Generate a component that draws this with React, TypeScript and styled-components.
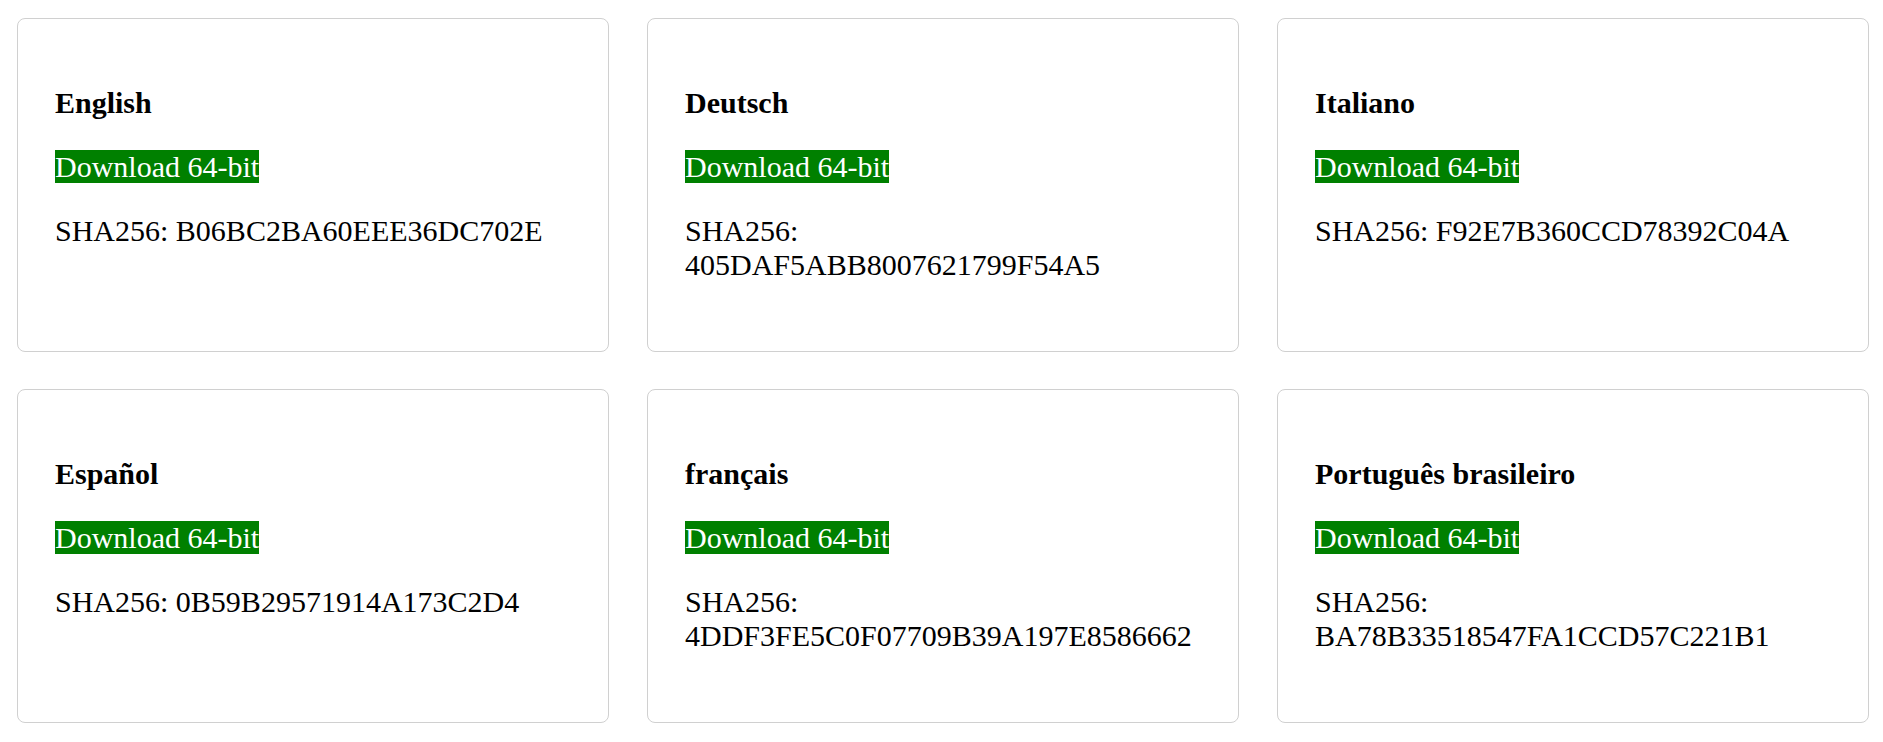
import React from "react";
import styled, { createGlobalStyle } from "styled-components";

const builds = [
  { lang: "English", sha: "B06BC2BA60EEE36DC702E" },
  { lang: "Deutsch", sha: "405DAF5ABB8007621799F54A5" },
  { lang: "Italiano", sha: "F92E7B360CCD78392C04A" },
  { lang: "Español", sha: "0B59B29571914A173C2D4" },
  { lang: "français", sha: "4DDF3FE5C0F07709B39A197E8586662" },
  { lang: "Português brasileiro", sha: "BA78B33518547FA1CCD57C221B1" },
];

const App: React.FC = () => {
  return (
    <>
      <GlobalStyle />
      <Grid>
        {builds.map((b) => (
          <Card key={b.lang}>
            <LangTitle>{b.lang}</LangTitle>
            <Line>
              <DownloadLink href="#">Download 64-bit</DownloadLink>
            </Line>
            <Line>SHA256: {b.sha}</Line>
          </Card>
        ))}
      </Grid>
    </>
  );
};

export default App;

/* =========== STYLES ============ */

const GlobalStyle = createGlobalStyle`
  html, body {
    margin: 0;
    background: #fff;
  }
  body {
    font-family: "Liberation Serif", "Times New Roman", serif;
    font-size: 30px;
    color: #000;
  }
`;

const Grid = styled.main`
  display: grid;
  grid-template-columns: repeat(3, 1fr);
  gap: 37px 38px;
  padding: 18px 14px 18px 17px;
`;

const Card = styled.section`
  border: 1px solid #d0d0d0;
  border-radius: 8px;
  padding: 37px 37px 39px;
  background: #fff;
`;

const LangTitle = styled.h4`
  margin: 30px 0;
  font-size: 30px;
  font-weight: 700;
`;

const Line = styled.p`
  margin: 30px 0;
`;

const DownloadLink = styled.a`
  background: #008000;
  color: #fff;
  text-decoration: none;
`;
